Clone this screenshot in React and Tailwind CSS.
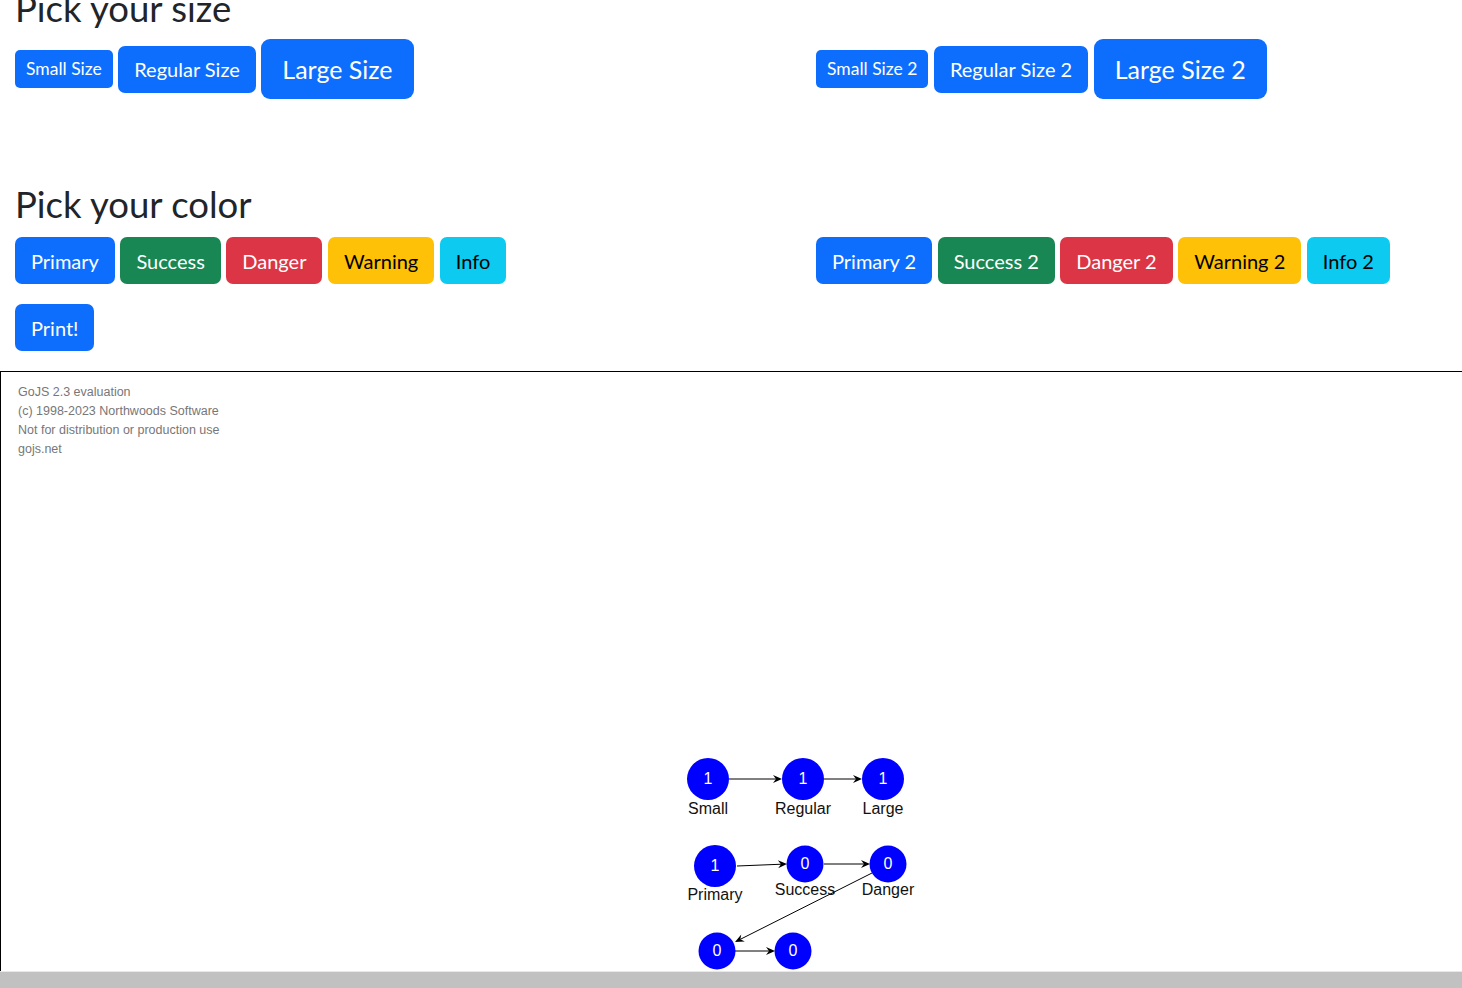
import React from 'react';

const variants = {
  primary: 'bg-[#0d6efd] text-white',
  success: 'bg-[#198754] text-white',
  danger: 'bg-[#dc3545] text-white',
  warning: 'bg-[#ffc107] text-black',
  info: 'bg-[#0dcaf0] text-black',
};

const sizes = {
  sm: 'h-[38px] px-[11px] text-[17.5px] rounded-[5px]',
  md: 'h-[47px] px-[16px] text-[20px] rounded-[7px]',
  lg: 'h-[60px] px-[21px] text-[25px] rounded-[9px]',
};

function Btn({ variant = 'primary', size = 'md', children }) {
  return (
    <button className={`${variants[variant]} ${sizes[size]} flex items-center justify-center whitespace-nowrap leading-none`}>
      {children}
    </button>
  );
}

function Row({ left, right }) {
  return (
    <div className="flex items-center">
      <div className="w-[801px] flex items-center gap-[5.5px]">{left}</div>
      <div className="flex items-center gap-[5.5px]">{right}</div>
    </div>
  );
}

const nodes = [
  { x: 708, y: 779, r: 21, n: '1', ny: 784, label: 'Small', ly: 814 },
  { x: 803, y: 779, r: 21, n: '1', ny: 784, label: 'Regular', ly: 814 },
  { x: 883, y: 779, r: 21, n: '1', ny: 784, label: 'Large', ly: 814 },
  { x: 715, y: 866, r: 21, n: '1', ny: 871, label: 'Primary', ly: 900 },
  { x: 805, y: 864, r: 18.5, n: '0', ny: 869, label: 'Success', ly: 895 },
  { x: 888, y: 864, r: 18.5, n: '0', ny: 869, label: 'Danger', ly: 895 },
  { x: 717, y: 951, r: 18.5, n: '0', ny: 956, label: '', ly: 0 },
  { x: 793, y: 951, r: 18.5, n: '0', ny: 956, label: '', ly: 0 },
];

const links = [
  [729, 779, 782, 779],
  [824, 779, 862, 779],
  [737, 866, 787, 864],
  [824, 864, 870, 864],
  [872, 873, 735, 942],
  [735, 951, 775, 951],
];

function Arrow({ x1, y1, x2, y2 }) {
  const a = Math.atan2(y2 - y1, x2 - x1);
  const len = 9, w = 4;
  const bx = x2 - len * Math.cos(a), by = y2 - len * Math.sin(a);
  const mx = x2 - 6 * Math.cos(a), my = y2 - 6 * Math.sin(a);
  const px = -Math.sin(a) * w, py = Math.cos(a) * w;
  return (
    <g>
      <line x1={x1} y1={y1} x2={mx} y2={my} stroke="#000" strokeWidth="1" />
      <polygon points={`${x2},${y2} ${bx + px},${by + py} ${mx},${my} ${bx - px},${by - py}`} fill="#000" />
    </g>
  );
}

export default function App() {
  return (
    <div className="w-[1462px] h-[988px] overflow-hidden bg-white flex flex-col text-[#212529] font-['Lato',sans-serif]">
      <div className="pl-[15px] -mt-[16px]">
        <h2 className="text-[36.5px] leading-[48px] font-normal mb-[7px]">Pick your size</h2>
        <Row
          left={<>
            <Btn size="sm">Small Size</Btn>
            <Btn>Regular Size</Btn>
            <Btn size="lg">Large Size</Btn>
          </>}
          right={<>
            <Btn size="sm">Small Size 2</Btn>
            <Btn>Regular Size 2</Btn>
            <Btn size="lg">Large Size 2</Btn>
          </>}
        />
        <h2 className="text-[36.5px] leading-[48px] font-normal mt-[81px] mb-[9px]">Pick your color</h2>
        <Row
          left={<>
            <Btn>Primary</Btn>
            <Btn variant="success">Success</Btn>
            <Btn variant="danger">Danger</Btn>
            <Btn variant="warning">Warning</Btn>
            <Btn variant="info">Info</Btn>
          </>}
          right={<>
            <Btn>Primary 2</Btn>
            <Btn variant="success">Success 2</Btn>
            <Btn variant="danger">Danger 2</Btn>
            <Btn variant="warning">Warning 2</Btn>
            <Btn variant="info">Info 2</Btn>
          </>}
        />
        <div className="mt-[20px] flex">
          <Btn>Print!</Btn>
        </div>
      </div>

      <div className="relative mt-[20px] flex-1 border-l border-t border-black">
        <div className="pl-[17px] pt-[11px] text-[12.5px] leading-[19px] text-[#777] font-['Liberation_Sans',Arial,sans-serif]">
          <div>GoJS 2.3 evaluation</div>
          <div>(c) 1998-2023 Northwoods Software</div>
          <div>Not for distribution or production use</div>
          <div>gojs.net</div>
        </div>
        <svg className="absolute left-[-1px] top-[-1px]" width="1462" height="617" viewBox="0 371 1462 617">
          {nodes.map((n, i) => (
            <g key={i}>
              <circle cx={n.x} cy={n.y} r={n.r} fill="#0000ff" />
              <text x={n.x} y={n.ny} textAnchor="middle" fill="#fff" fontSize="16" fontFamily="Liberation Sans, Arial, sans-serif">{n.n}</text>
              {n.label && (
                <text x={n.x} y={n.ly} textAnchor="middle" fill="#111" fontSize="16" fontFamily="Liberation Sans, Arial, sans-serif">{n.label}</text>
              )}
            </g>
          ))}
          {links.map(([x1, y1, x2, y2], i) => (
            <Arrow key={i} x1={x1} y1={y1} x2={x2} y2={y2} />
          ))}
        </svg>
      </div>

      <div className="relative h-[17px] bg-[#f1f1f1] border-t border-[#e8e8e8]">
        <div className="h-full bg-[#c1c1c1]" />
      </div>
    </div>
  );
}
